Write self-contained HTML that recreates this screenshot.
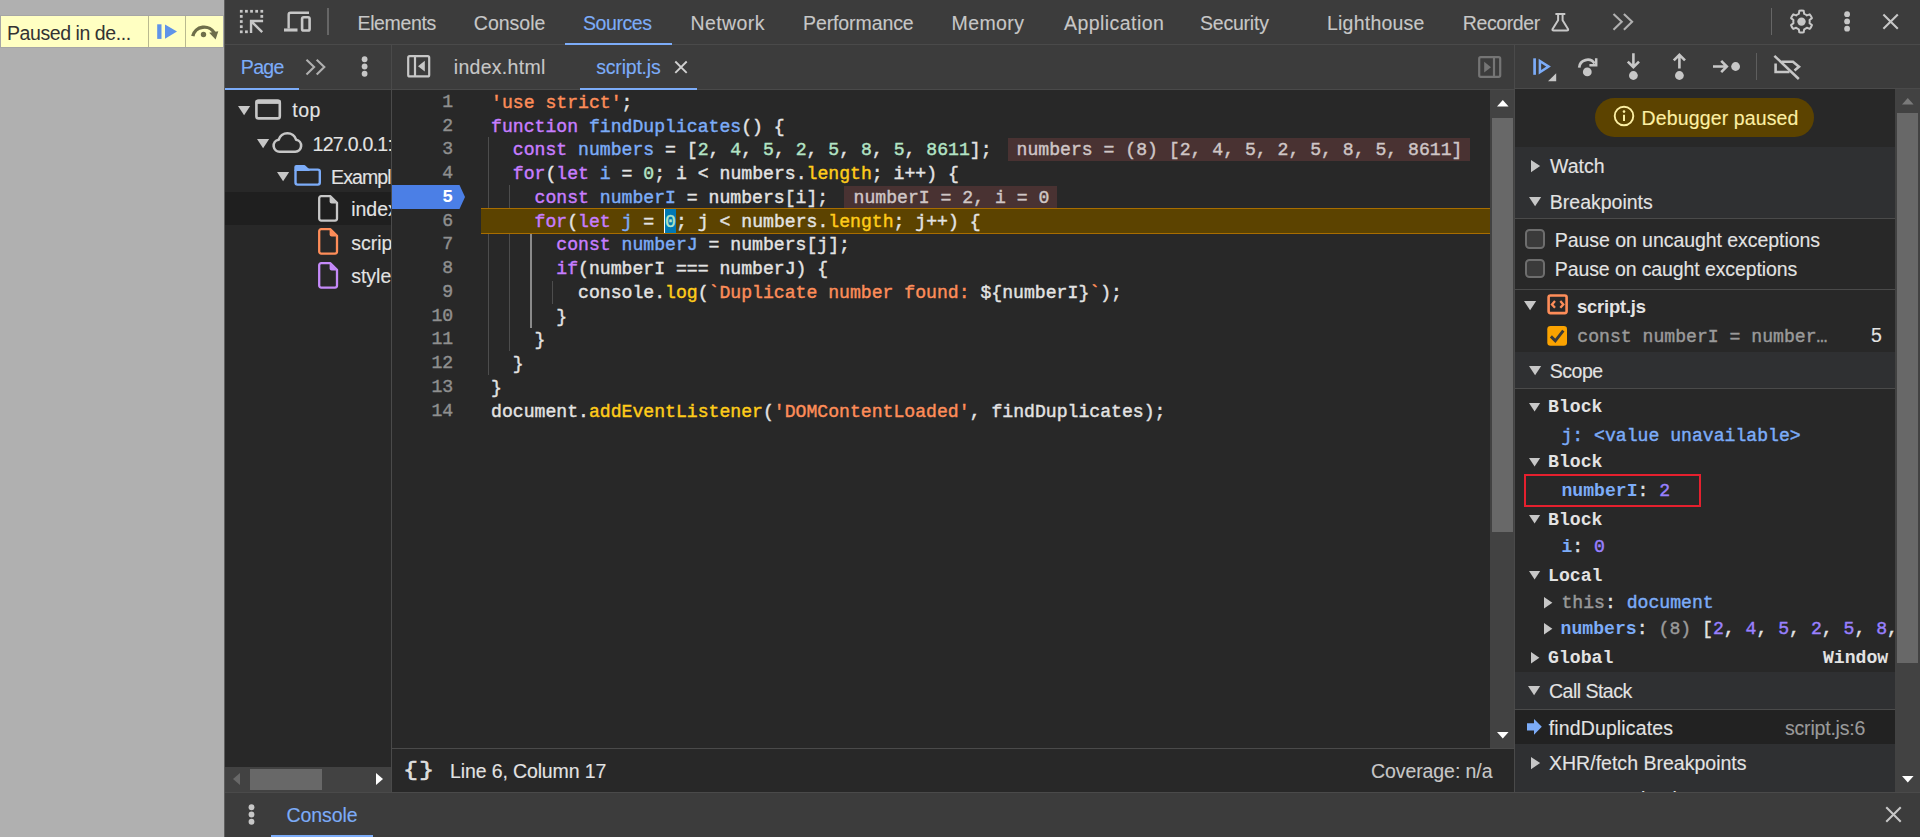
<!DOCTYPE html>
<html lang="en"><head><meta charset="utf-8"><title>DevTools - Sources</title>
<style>
html,body{margin:0;padding:0;background:#282828}
#r{position:relative;width:1920px;height:837px;overflow:hidden;font-family:"Liberation Sans", sans-serif}
#r div,#r svg,#r span.s,#r span.m{position:absolute}
#r svg{overflow:visible}
.s{white-space:pre;line-height:24px;font-family:"Liberation Sans", sans-serif;-webkit-text-stroke:.12px}
.m{white-space:pre;line-height:24px;font-family:"Liberation Mono", monospace;color:#e3e3e3;-webkit-text-stroke:.42px}
.m b{font-weight:inherit}
</style></head>
<body><div id="r">
<div style="left:0px;top:0px;width:224px;height:837px;background:#b0b0b0;"></div>
<div style="left:224px;top:0px;width:1696px;height:837px;background:#282828;"></div>
<div style="left:224px;top:0px;width:1px;height:837px;background:#5e5e5e;"></div>
<div style="left:225px;top:0px;width:1695px;height:44px;background:#3c3c3c;"></div>
<div style="left:225px;top:44px;width:1695px;height:1px;background:#4a4a4a;"></div>
<div style="left:225px;top:45px;width:1695px;height:44px;background:#3c3c3c;"></div>
<div style="left:225px;top:89px;width:1695px;height:1px;background:#4a4a4a;"></div>
<div style="left:391px;top:45px;width:1px;height:747px;background:#4a4a4a;"></div>
<div style="left:1514px;top:45px;width:1px;height:747px;background:#4a4a4a;"></div>
<div style="left:225px;top:792px;width:1695px;height:45px;background:#3c3c3c;"></div>
<div style="left:225px;top:792px;width:1695px;height:1px;background:#4a4a4a;"></div>
<div style="left:0px;top:15px;width:224px;height:33px;background:#ffffc2;box-sizing:border-box;border:1px solid #a6a6a6"></div>
<div style="left:148px;top:16px;width:1px;height:31px;background:#b9b98f;"></div>
<div style="left:185px;top:16px;width:1px;height:31px;background:#b9b98f;"></div>
<span id="t1" class="s" style="left:7px;top:21.16px;font-size:19.5px;color:#333333;letter-spacing:-0.429px;-webkit-text-stroke:0;">Paused in de...</span>
<div style="left:327px;top:8px;width:1.6px;height:27px;background:#666;"></div>
<span id="t2" class="s" style="left:357.5px;top:10.86px;font-size:19.5px;color:#c7c7c7;letter-spacing:-0.357px;">Elements</span>
<span id="t3" class="s" style="left:473.8px;top:10.86px;font-size:19.5px;color:#c7c7c7;">Console</span>
<span id="t4" class="s" style="left:583px;top:10.86px;font-size:19.5px;color:#7cacf8;letter-spacing:-0.417px;">Sources</span>
<span id="t5" class="s" style="left:690.5px;top:10.86px;font-size:19.5px;color:#c7c7c7;letter-spacing:0.417px;">Network</span>
<span id="t6" class="s" style="left:803px;top:10.86px;font-size:19.5px;color:#c7c7c7;letter-spacing:-0.100px;">Performance</span>
<span id="t7" class="s" style="left:951.5px;top:10.86px;font-size:19.5px;color:#c7c7c7;letter-spacing:0.400px;">Memory</span>
<span id="t8" class="s" style="left:1064px;top:10.86px;font-size:19.5px;color:#c7c7c7;letter-spacing:0.450px;">Application</span>
<span id="t9" class="s" style="left:1200px;top:10.86px;font-size:19.5px;color:#c7c7c7;letter-spacing:-0.214px;">Security</span>
<span id="t10" class="s" style="left:1327px;top:10.86px;font-size:19.5px;color:#c7c7c7;letter-spacing:0.222px;">Lighthouse</span>
<span id="t11" class="s" style="left:1462.8px;top:10.86px;font-size:19.5px;color:#c7c7c7;letter-spacing:-0.400px;">Recorder</span>
<div style="left:565px;top:43px;width:107px;height:2px;background:#7cacf8;"></div>
<div style="left:1770.5px;top:8px;width:1.6px;height:27px;background:#666;"></div>
<span id="t12" class="s" style="left:240.8px;top:55.16px;font-size:19.5px;color:#7cacf8;letter-spacing:-0.667px;">Page</span>
<div style="left:225px;top:88px;width:74px;height:2px;background:#7cacf8;"></div>
<svg style="left:406px;top:54px;" width="26" height="24" viewBox="0 0 26 24"><rect x="2.2" y="2.2" width="21" height="20.2" rx="1.5" fill="none" stroke="#c7c7c7" stroke-width="2.2"/><path d="M9 2V22" stroke="#c7c7c7" stroke-width="2.2"/><path d="M18.8 6.8V17.6L12 12.2Z" fill="#c7c7c7"/></svg>
<span id="t13" class="s" style="left:453.8px;top:55.16px;font-size:19.5px;color:#c7c7c7;letter-spacing:0.289px;">index.html</span>
<span id="t14" class="s" style="left:596.3px;top:55.16px;font-size:19.5px;color:#7cacf8;letter-spacing:-0.213px;">script.js</span>
<div style="left:580px;top:87.6px;width:117px;height:2.4px;background:#7cacf8;"></div>
<svg style="left:1476.5px;top:54.5px;" width="26" height="24" viewBox="0 0 26 24"><rect x="2.2" y="2.2" width="21" height="19.6" rx="1.5" fill="none" stroke="#757575" stroke-width="2.2"/><path d="M17 2V22" stroke="#757575" stroke-width="2.2"/><path d="M7.2 6.8V17.6L14 12.2Z" fill="#757575"/></svg>
<div style="left:1756px;top:53px;width:1px;height:27px;background:#5e5e5e;"></div>
<div style="left:225px;top:192px;width:166px;height:33px;background:#1f1f1f;"></div>
<svg style="left:238.2px;top:106.1px;" width="12.2" height="9.2" viewBox="0 0 12.2 9.2"><path d="M0 0H12.2L6.1 9.2Z" fill="#c7c7c7"/></svg>
<span id="t15" class="s" style="left:292.3px;top:98.46px;font-size:19.5px;color:#e3e3e3;letter-spacing:0.500px;">top</span>
<svg style="left:257.4px;top:138.9px;" width="12.2" height="9.2" viewBox="0 0 12.2 9.2"><path d="M0 0H12.2L6.1 9.2Z" fill="#c7c7c7"/></svg>
<div style="left:300px;top:126px;width:91px;height:33px;overflow:hidden">
<span id="t16" class="s" style="left:12.6px;top:5.86px;font-size:19.5px;color:#e3e3e3;letter-spacing:-0.722px;">127.0.0.1:</span>
</div>
<svg style="left:276.9px;top:172.2px;" width="12.2" height="9.2" viewBox="0 0 12.2 9.2"><path d="M0 0H12.2L6.1 9.2Z" fill="#c7c7c7"/></svg>
<div style="left:320px;top:159px;width:71px;height:33px;overflow:hidden">
<span id="t17" class="s" style="left:11.1px;top:5.66px;font-size:19.5px;color:#e3e3e3;letter-spacing:-0.900px;">Exampl</span>
</div>
<svg style="left:317.7px;top:195.0px;" width="21" height="27" viewBox="0 0 21 27"><path d="M3.2 1.2H12.4L19 7.8V23.6A2 2 0 0 1 17 25.6H3.2A2 2 0 0 1 1.2 23.6V3.2A2 2 0 0 1 3.2 1.2Z" fill="none" stroke="#c7c7c7" stroke-width="2.3" stroke-linejoin="round"/><path d="M11.6 1.2L19 8.6H13.6A2 2 0 0 1 11.6 6.6Z" fill="#c7c7c7"/></svg>
<div style="left:340px;top:191.5px;width:51px;height:33px;overflow:hidden">
<span id="t18" class="s" style="left:11.2px;top:5.86px;font-size:19.5px;color:#e3e3e3;">index.html</span>
</div>
<svg style="left:317.7px;top:228.3px;" width="21" height="27" viewBox="0 0 21 27"><path d="M3.2 1.2H12.4L19 7.8V23.6A2 2 0 0 1 17 25.6H3.2A2 2 0 0 1 1.2 23.6V3.2A2 2 0 0 1 3.2 1.2Z" fill="none" stroke="#fe8d59" stroke-width="2.3" stroke-linejoin="round"/><path d="M11.6 1.2L19 8.6H13.6A2 2 0 0 1 11.6 6.6Z" fill="#fe8d59"/></svg>
<div style="left:340px;top:224.8px;width:51px;height:33px;overflow:hidden">
<span id="t19" class="s" style="left:11.2px;top:5.86px;font-size:19.5px;color:#e3e3e3;">script.js</span>
</div>
<svg style="left:317.7px;top:261.7px;" width="21" height="27" viewBox="0 0 21 27"><path d="M3.2 1.2H12.4L19 7.8V23.6A2 2 0 0 1 17 25.6H3.2A2 2 0 0 1 1.2 23.6V3.2A2 2 0 0 1 3.2 1.2Z" fill="none" stroke="#c58af9" stroke-width="2.3" stroke-linejoin="round"/><path d="M11.6 1.2L19 8.6H13.6A2 2 0 0 1 11.6 6.6Z" fill="#c58af9"/></svg>
<div style="left:340px;top:258.2px;width:51px;height:33px;overflow:hidden">
<span id="t20" class="s" style="left:11.2px;top:5.86px;font-size:19.5px;color:#e3e3e3;">styles.css</span>
</div>
<div style="left:225px;top:767px;width:166px;height:25px;background:#424242;"></div>
<div style="left:250px;top:769px;width:72px;height:21px;background:#686868;"></div>
<svg style="left:233px;top:773px;" width="8" height="12" viewBox="0 0 8 12"><path d="M7 0V12L0 6Z" fill="#686868"/></svg>
<svg style="left:375.5px;top:773px;" width="8" height="12" viewBox="0 0 8 12"><path d="M0 0V12L7 6Z" fill="#ffffff"/></svg>
<span class="m" style="left:442.31px;top:89.87px;font-size:18.14px;letter-spacing:0.000px;color:#8f8f8f;">1</span>
<span class="m" style="left:442.31px;top:113.63px;font-size:18.14px;letter-spacing:0.000px;color:#8f8f8f;">2</span>
<span class="m" style="left:442.31px;top:137.39px;font-size:18.14px;letter-spacing:0.000px;color:#8f8f8f;">3</span>
<span class="m" style="left:442.31px;top:161.15px;font-size:18.14px;letter-spacing:0.000px;color:#8f8f8f;">4</span>
<span class="m" style="left:442.31px;top:208.67px;font-size:18.14px;letter-spacing:0.000px;color:#8f8f8f;">6</span>
<span class="m" style="left:442.31px;top:232.43px;font-size:18.14px;letter-spacing:0.000px;color:#8f8f8f;">7</span>
<span class="m" style="left:442.31px;top:256.19px;font-size:18.14px;letter-spacing:0.000px;color:#8f8f8f;">8</span>
<span class="m" style="left:442.31px;top:279.95px;font-size:18.14px;letter-spacing:0.000px;color:#8f8f8f;">9</span>
<span class="m" style="left:431.43px;top:303.71px;font-size:18.14px;letter-spacing:0.000px;color:#8f8f8f;">10</span>
<span class="m" style="left:431.43px;top:327.47px;font-size:18.14px;letter-spacing:0.000px;color:#8f8f8f;">11</span>
<span class="m" style="left:431.43px;top:351.23px;font-size:18.14px;letter-spacing:0.000px;color:#8f8f8f;">12</span>
<span class="m" style="left:431.43px;top:374.99px;font-size:18.14px;letter-spacing:0.000px;color:#8f8f8f;">13</span>
<span class="m" style="left:431.43px;top:398.75px;font-size:18.14px;letter-spacing:0.000px;color:#8f8f8f;">14</span>
<svg style="left:392px;top:185px;" width="74" height="24" viewBox="0 0 74 24"><path d="M0 0H67.5L73 12L67.5 24H0Z" fill="#4b7fe6"/><path d="M65 0H67.5L73 12L67.5 24H65L70.5 12Z" fill="#2f6fe0" opacity=".0"/></svg>
<span class="m" style="left:442.31px;top:184.91px;font-size:18.14px;letter-spacing:0.000px;font-weight:700;-webkit-text-stroke:0;color:#fff;">5</span>
<div style="left:488px;top:137px;width:1px;height:71px;background:#4d4d4d;"></div>
<div style="left:488px;top:234px;width:1px;height:140.5px;background:#4d4d4d;"></div>
<div style="left:509px;top:185px;width:1px;height:23px;background:#4d4d4d;"></div>
<div style="left:509px;top:234px;width:1px;height:116.7px;background:#4d4d4d;"></div>
<div style="left:530px;top:234px;width:2px;height:94px;background:#8a8a8a;"></div>
<div style="left:552px;top:281px;width:1px;height:23px;background:#4d4d4d;"></div>
<div style="left:481px;top:208px;width:1009px;height:26px;background:#5c4300;box-sizing:border-box;border-top:1px solid #a86d00;border-bottom:1px solid #a86d00"></div>
<div style="left:664px;top:209px;width:12px;height:24px;background:#0078b4;"></div>
<div style="left:664px;top:209px;width:1px;height:24px;background:#ffffff;"></div>
<div style="left:1008.4px;top:138.4px;width:462px;height:22.6px;background:#493232;"></div>
<div style="left:844px;top:185.9px;width:212.7px;height:22.6px;background:#493232;"></div>
<span class="m" style="left:491.00px;top:90.77px;font-size:18.14px;letter-spacing:0.000px;"><b style="color:#fe8d59">&#x27;use strict&#x27;</b><b style="color:#e3e3e3">;</b></span>
<span class="m" style="left:491.00px;top:114.53px;font-size:18.14px;letter-spacing:0.000px;"><b style="color:#c77dff">function</b> <b style="color:#7cacf8">findDuplicates</b><b style="color:#e3e3e3">() {</b></span>
<span class="m" style="left:491.00px;top:138.29px;font-size:18.14px;letter-spacing:0.000px;">  <b style="color:#c77dff">const</b> <b style="color:#7cacf8">numbers</b><b style="color:#e3e3e3"> = [</b><b style="color:#b3e4c5">2</b><b style="color:#e3e3e3">, </b><b style="color:#b3e4c5">4</b><b style="color:#e3e3e3">, </b><b style="color:#b3e4c5">5</b><b style="color:#e3e3e3">, </b><b style="color:#b3e4c5">2</b><b style="color:#e3e3e3">, </b><b style="color:#b3e4c5">5</b><b style="color:#e3e3e3">, </b><b style="color:#b3e4c5">8</b><b style="color:#e3e3e3">, </b><b style="color:#b3e4c5">5</b><b style="color:#e3e3e3">, </b><b style="color:#b3e4c5">8611</b><b style="color:#e3e3e3">];</b></span>
<span class="m" style="left:491.00px;top:162.05px;font-size:18.14px;letter-spacing:0.000px;">  <b style="color:#c77dff">for</b><b style="color:#e3e3e3">(</b><b style="color:#c77dff">let</b> <b style="color:#7cacf8">i</b><b style="color:#e3e3e3"> = </b><b style="color:#b3e4c5">0</b><b style="color:#e3e3e3">; i &lt; numbers.</b><b style="color:#ffcc1a">length</b><b style="color:#e3e3e3">; i++) {</b></span>
<span class="m" style="left:491.00px;top:185.81px;font-size:18.14px;letter-spacing:0.000px;">    <b style="color:#c77dff">const</b> <b style="color:#7cacf8">numberI</b><b style="color:#e3e3e3"> = numbers[i];</b></span>
<span class="m" style="left:491.00px;top:209.57px;font-size:18.14px;letter-spacing:0.000px;">    <b style="color:#c77dff">for</b><b style="color:#e3e3e3">(</b><b style="color:#c77dff">let</b> <b style="color:#7cacf8">j</b><b style="color:#e3e3e3"> = </b><b style="color:#b3e4c5">0</b><b style="color:#e3e3e3">; j &lt; numbers.</b><b style="color:#ffcc1a">length</b><b style="color:#e3e3e3">; j++) {</b></span>
<span class="m" style="left:491.00px;top:233.33px;font-size:18.14px;letter-spacing:0.000px;">      <b style="color:#c77dff">const</b> <b style="color:#7cacf8">numberJ</b><b style="color:#e3e3e3"> = numbers[j];</b></span>
<span class="m" style="left:491.00px;top:257.09px;font-size:18.14px;letter-spacing:0.000px;">      <b style="color:#c77dff">if</b><b style="color:#e3e3e3">(numberI === numberJ) {</b></span>
<span class="m" style="left:491.00px;top:280.85px;font-size:18.14px;letter-spacing:0.000px;">        <b style="color:#e3e3e3">console.</b><b style="color:#ffcc1a">log</b><b style="color:#e3e3e3">(</b><b style="color:#fe8d59">`Duplicate number found: </b><b style="color:#e3e3e3">${numberI}</b><b style="color:#fe8d59">`</b><b style="color:#e3e3e3">);</b></span>
<span class="m" style="left:491.00px;top:304.61px;font-size:18.14px;letter-spacing:0.000px;">      <b style="color:#e3e3e3">}</b></span>
<span class="m" style="left:491.00px;top:328.37px;font-size:18.14px;letter-spacing:0.000px;">    <b style="color:#e3e3e3">}</b></span>
<span class="m" style="left:491.00px;top:352.13px;font-size:18.14px;letter-spacing:0.000px;">  <b style="color:#e3e3e3">}</b></span>
<span class="m" style="left:491.00px;top:375.89px;font-size:18.14px;letter-spacing:0.000px;"><b style="color:#e3e3e3">}</b></span>
<span class="m" style="left:491.00px;top:399.65px;font-size:18.14px;letter-spacing:0.000px;"><b style="color:#e3e3e3">document.</b><b style="color:#ffcc1a">addEventListener</b><b style="color:#e3e3e3">(</b><b style="color:#fe8d59">&#x27;DOMContentLoaded&#x27;</b><b style="color:#e3e3e3">, findDuplicates);</b></span>
<span class="m" style="left:1016.50px;top:138.29px;font-size:18.14px;letter-spacing:0.000px;"><b style="color:#cfc6c6">numbers = (8) [2, 4, 5, 2, 5, 8, 5, 8611]</b></span>
<span class="m" style="left:853.60px;top:185.81px;font-size:18.14px;letter-spacing:0.000px;"><b style="color:#cfc6c6">numberI = 2, i = 0</b></span>
<div style="left:1490px;top:90px;width:24px;height:658px;background:#424242;"></div>
<div style="left:1492px;top:118px;width:21px;height:413.5px;background:#686868;"></div>
<svg style="left:1496.7px;top:99.7px;" width="11.6" height="6.6" viewBox="0 0 11.6 6.6"><path d="M0 6.6H11.6L5.8 0Z" fill="#ffffff"/></svg>
<svg style="left:1496.7px;top:731.6px;" width="11.6" height="6.6" viewBox="0 0 11.6 6.6"><path d="M0 0H11.6L5.8 6.6Z" fill="#ffffff"/></svg>
<div style="left:392px;top:748px;width:1122px;height:1px;background:#4a4a4a;"></div>
<span class="m" style="left:403.2px;top:758.6px;font-size:21px;-webkit-text-stroke:.6px;color:#dedede;letter-spacing:.8px;transform:scaleX(1.2);transform-origin:0 0">{}</span>
<span id="t21" class="s" style="left:450px;top:759.36px;font-size:19.5px;color:#e3e3e3;letter-spacing:-0.125px;">Line 6, Column 17</span>
<span id="t22" class="s" style="left:1371px;top:759.36px;font-size:19.5px;color:#c7c7c7;letter-spacing:-0.083px;">Coverage: n/a</span>
<div style="left:1595px;top:98px;width:219px;height:39px;background:#5c4300;border-radius:20px"></div>
<svg style="left:1613px;top:104.6px;" width="22" height="22" viewBox="0 0 22 22"><circle cx="11" cy="11" r="9.3" fill="none" stroke="#fcefa3" stroke-width="1.9"/><path d="M11 9.8V16" stroke="#fcefa3" stroke-width="2"/><circle cx="11" cy="6.6" r="1.3" fill="#fcefa3"/></svg>
<span id="t23" class="s" style="left:1641.6px;top:106.36px;font-size:19.5px;color:#fcefa3;letter-spacing:0.129px;">Debugger paused</span>
<div style="left:1515px;top:147px;width:380px;height:71px;background:#2f3032;"></div>
<div style="left:1515px;top:218px;width:380px;height:1px;background:#4a4a4a;"></div>
<svg style="left:1530.9px;top:159.7px;" width="9.2" height="12.2" viewBox="0 0 9.2 12.2"><path d="M0 0V12.2L9.2 6.1Z" fill="#c7c7c7"/></svg>
<span id="t24" class="s" style="left:1550px;top:154.36px;font-size:19.5px;color:#e3e3e3;">Watch</span>
<svg style="left:1528.9px;top:196.9px;" width="12.2" height="9.2" viewBox="0 0 12.2 9.2"><path d="M0 0H12.2L6.1 9.2Z" fill="#c7c7c7"/></svg>
<span id="t25" class="s" style="left:1549.8px;top:190.36px;font-size:19.5px;color:#e3e3e3;">Breakpoints</span>
<div style="left:1525px;top:229.2px;width:19.6px;height:19.6px;background:#3b3b3b;box-sizing:border-box;border:2px solid #6e6e6e;border-radius:4.5px"></div>
<div style="left:1525px;top:258.9px;width:19.6px;height:19.6px;background:#3b3b3b;box-sizing:border-box;border:2px solid #6e6e6e;border-radius:4.5px"></div>
<span id="t26" class="s" style="left:1554.8px;top:227.86px;font-size:19.5px;color:#e3e3e3;letter-spacing:-0.056px;">Pause on uncaught exceptions</span>
<span id="t27" class="s" style="left:1554.8px;top:257.36px;font-size:19.5px;color:#e3e3e3;letter-spacing:-0.100px;">Pause on caught exceptions</span>
<div style="left:1515px;top:289px;width:380px;height:1px;background:#4a4a4a;"></div>
<svg style="left:1524.4px;top:301.4px;" width="12.2" height="9.2" viewBox="0 0 12.2 9.2"><path d="M0 0H12.2L6.1 9.2Z" fill="#c7c7c7"/></svg>
<span id="t28" class="s" style="left:1577px;top:295.02px;font-size:18.4px;color:#e3e3e3;font-weight:700;-webkit-text-stroke:0;letter-spacing:-0.188px;">script.js</span>
<span class="m" style="left:1577.30px;top:324.67px;font-size:18.14px;letter-spacing:0.000px;"><b style="color:#9a9a9a">const numberI = number…</b></span>
<span id="t29" class="s" style="left:1871px;top:323.46px;font-size:19.5px;color:#e3e3e3;">5</span>
<div style="left:1515px;top:352px;width:380px;height:36px;background:#2f3032;"></div>
<div style="left:1515px;top:388px;width:380px;height:1px;background:#4a4a4a;"></div>
<svg style="left:1528.9px;top:366.4px;" width="12.2" height="9.2" viewBox="0 0 12.2 9.2"><path d="M0 0H12.2L6.1 9.2Z" fill="#c7c7c7"/></svg>
<span id="t30" class="s" style="left:1549.8px;top:359.16px;font-size:19.5px;color:#e3e3e3;letter-spacing:-0.500px;">Scope</span>
<svg style="left:1528.9px;top:403.2px;" width="11.2" height="8.6" viewBox="0 0 11.2 8.6"><path d="M0 0H11.2L5.6 8.6Z" fill="#c7c7c7"/></svg>
<span class="m" style="left:1548.00px;top:395.07px;font-size:18.14px;letter-spacing:0.000px;font-weight:700;-webkit-text-stroke:0;"><b style="color:#e3e3e3">Block</b></span>
<span class="m" style="left:1561.40px;top:423.77px;font-size:18.14px;letter-spacing:0.000px;"><b style="color:#7cacf8">j: &lt;value unavailable&gt;</b></span>
<svg style="left:1528.9px;top:458.4px;" width="11.2" height="8.6" viewBox="0 0 11.2 8.6"><path d="M0 0H11.2L5.6 8.6Z" fill="#c7c7c7"/></svg>
<span class="m" style="left:1548.00px;top:450.27px;font-size:18.14px;letter-spacing:0.000px;font-weight:700;-webkit-text-stroke:0;"><b style="color:#e3e3e3">Block</b></span>
<div style="left:1524.4px;top:474.3px;width:176.6px;height:32.6px;background:transparent;box-sizing:border-box;border:2px solid #e5202e"></div>
<span class="m" style="left:1561.40px;top:479.37px;font-size:18.14px;letter-spacing:0.000px;"><b style="color:#7cacf8;font-weight:700;-webkit-text-stroke:0">numberI</b><b style="color:#e3e3e3">: </b><b style="color:#9980ff">2</b></span>
<svg style="left:1528.9px;top:515.4px;" width="11.2" height="8.6" viewBox="0 0 11.2 8.6"><path d="M0 0H11.2L5.6 8.6Z" fill="#c7c7c7"/></svg>
<span class="m" style="left:1548.00px;top:507.87px;font-size:18.14px;letter-spacing:0.000px;font-weight:700;-webkit-text-stroke:0;"><b style="color:#e3e3e3">Block</b></span>
<span class="m" style="left:1561.40px;top:535.27px;font-size:18.14px;letter-spacing:0.000px;"><b style="color:#7cacf8;font-weight:700;-webkit-text-stroke:0">i</b><b style="color:#e3e3e3">: </b><b style="color:#9980ff">0</b></span>
<svg style="left:1528.9px;top:571.4px;" width="11.2" height="8.6" viewBox="0 0 11.2 8.6"><path d="M0 0H11.2L5.6 8.6Z" fill="#c7c7c7"/></svg>
<span class="m" style="left:1548.00px;top:563.87px;font-size:18.14px;letter-spacing:0.000px;font-weight:700;-webkit-text-stroke:0;"><b style="color:#e3e3e3">Local</b></span>
<svg style="left:1544.0px;top:596.8px;" width="8.4" height="11.4" viewBox="0 0 8.4 11.4"><path d="M0 0V11.4L8.4 5.7Z" fill="#c7c7c7"/></svg>
<span class="m" style="left:1561.40px;top:591.27px;font-size:18.14px;letter-spacing:0.000px;"><b style="color:#9a9a9a">this</b><b style="color:#e3e3e3">: </b><b style="color:#7cacf8">document</b></span>
<svg style="left:1544.0px;top:622.9px;" width="8.4" height="11.4" viewBox="0 0 8.4 11.4"><path d="M0 0V11.4L8.4 5.7Z" fill="#c7c7c7"/></svg>
<div style="left:1555px;top:615px;width:340px;height:28px;overflow:hidden">
<span class="m" style="left:5.60px;top:2.37px;font-size:18.14px;letter-spacing:0.000px;"><b style="color:#7cacf8;font-weight:700;-webkit-text-stroke:0">numbers</b><b style="color:#e3e3e3">: </b><b style="color:#9a9a9a">(8) </b><b style="color:#e3e3e3">[</b><b style="color:#9980ff">2</b><b style="color:#e3e3e3">, </b><b style="color:#9980ff">4</b><b style="color:#e3e3e3">, </b><b style="color:#9980ff">5</b><b style="color:#e3e3e3">, </b><b style="color:#9980ff">2</b><b style="color:#e3e3e3">, </b><b style="color:#9980ff">5</b><b style="color:#e3e3e3">, </b><b style="color:#9980ff">8</b><b style="color:#e3e3e3">, </b><b style="color:#9980ff">5</b><b style="color:#e3e3e3">, </b><b style="color:#9980ff">8611</b><b style="color:#e3e3e3">]</b></span>
</div>
<svg style="left:1530.8px;top:651.7px;" width="8.4" height="11.4" viewBox="0 0 8.4 11.4"><path d="M0 0V11.4L8.4 5.7Z" fill="#c7c7c7"/></svg>
<span class="m" style="left:1548.00px;top:645.87px;font-size:18.14px;letter-spacing:0.000px;font-weight:700;-webkit-text-stroke:0;"><b style="color:#e3e3e3">Global</b></span>
<span class="m" style="left:1822.98px;top:646.17px;font-size:18.14px;letter-spacing:0.000px;font-weight:700;-webkit-text-stroke:0;"><b style="color:#e3e3e3">Window</b></span>
<div style="left:1515px;top:672px;width:380px;height:37px;background:#2f3032;"></div>
<div style="left:1515px;top:709px;width:380px;height:1px;background:#4a4a4a;"></div>
<svg style="left:1528.2px;top:686.4px;" width="12.2" height="9.2" viewBox="0 0 12.2 9.2"><path d="M0 0H12.2L6.1 9.2Z" fill="#c7c7c7"/></svg>
<span id="t31" class="s" style="left:1549px;top:679.36px;font-size:19.5px;color:#e3e3e3;letter-spacing:-0.511px;">Call Stack</span>
<div style="left:1515px;top:710px;width:380px;height:34px;background:#222222;"></div>
<svg style="left:1526.6px;top:719.1px;" width="16" height="16" viewBox="0 0 16 16"><path d="M0 4.2H7V0L14.8 7.85L7 15.7V11.5H0Z" fill="#7cacf8"/></svg>
<span id="t32" class="s" style="left:1548.7px;top:716.36px;font-size:19.5px;color:#e3e3e3;letter-spacing:0.138px;">findDuplicates</span>
<span id="t33" class="s" style="left:1785px;top:716.36px;font-size:19.5px;color:#9a9a9a;letter-spacing:-0.200px;">script.js:6</span>
<div style="left:1515px;top:744px;width:380px;height:48px;background:#2f3032;"></div>
<svg style="left:1530.9px;top:756.9px;" width="9.2" height="12.2" viewBox="0 0 9.2 12.2"><path d="M0 0V12.2L9.2 6.1Z" fill="#c7c7c7"/></svg>
<span id="t34" class="s" style="left:1549px;top:751.36px;font-size:19.5px;color:#e3e3e3;letter-spacing:0.015px;">XHR/fetch Breakpoints</span>
<div style="left:1515px;top:780px;width:380px;height:12px;overflow:hidden">
<svg style="left:15.9px;top:12.9px;" width="9.2" height="12.2" viewBox="0 0 9.2 12.2"><path d="M0 0V12.2L9.2 6.1Z" fill="#c7c7c7"/></svg>
<span id="t35" class="s" style="left:34px;top:7.26px;font-size:19.5px;color:#e3e3e3;">DOM Breakpoints</span>
</div>
<div style="left:1515px;top:88px;width:405px;height:1px;background:#4a4a4a;"></div>
<div style="left:1515px;top:89px;width:380px;height:1px;background:#282828;"></div>
<div style="left:1895px;top:89px;width:25px;height:703px;background:#424242;"></div>
<div style="left:1897px;top:113px;width:21px;height:550px;background:#686868;"></div>
<svg style="left:1901.7px;top:97.6px;" width="11.6" height="6.6" viewBox="0 0 11.6 6.6"><path d="M0 6.6H11.6L5.8 0Z" fill="#7a7a7a"/></svg>
<svg style="left:1901.7px;top:775.6px;" width="11.6" height="6.6" viewBox="0 0 11.6 6.6"><path d="M0 0H11.6L5.8 6.6Z" fill="#ffffff"/></svg>
<span id="t36" class="s" style="left:286.5px;top:803.16px;font-size:19.5px;color:#7cacf8;letter-spacing:-0.083px;">Console</span>
<div style="left:271px;top:835px;width:102px;height:2px;background:#7cacf8;"></div>
<svg style="left:0;top:0" width="1920" height="837" viewBox="0 0 1920 837"><rect x="157.2" y="24.3" width="4.3" height="14.6" fill="#5f93e8"/><path d="M165 24.4L177 31.6L165 38.7Z" fill="#5f93e8"/><path d="M192.8 36.2A11.6 11.2 0 0 1 214.6 33.4" fill="none" stroke="#6e6e4a" stroke-width="3.5"/><path d="M209.2 32.8L218.3 31.2L215.6 39.4Z" fill="#6e6e4a"/><circle cx="203.5" cy="34.5" r="2.7" fill="#6e6e4a"/><rect x="239.90" y="9.90" width="2.75" height="2.75" fill="#c7c7c7"/><rect x="245.03" y="9.90" width="2.75" height="2.75" fill="#c7c7c7"/><rect x="239.90" y="15.03" width="2.75" height="2.75" fill="#c7c7c7"/><rect x="250.16" y="9.90" width="2.75" height="2.75" fill="#c7c7c7"/><rect x="239.90" y="20.16" width="2.75" height="2.75" fill="#c7c7c7"/><rect x="255.29" y="9.90" width="2.75" height="2.75" fill="#c7c7c7"/><rect x="239.90" y="25.29" width="2.75" height="2.75" fill="#c7c7c7"/><rect x="260.42" y="9.90" width="2.75" height="2.75" fill="#c7c7c7"/><rect x="239.90" y="30.42" width="2.75" height="2.75" fill="#c7c7c7"/><rect x="245.03" y="30.42" width="2.75" height="2.75" fill="#c7c7c7"/><rect x="260.42" y="15.03" width="2.75" height="2.75" fill="#c7c7c7"/><path d="M249.9 21.05H263.1M251.05 19.9V33M251.4 21.4L262.2 32.2" fill="none" stroke="#c7c7c7" stroke-width="2.4"/><path d="M288.65 28.6V14.6Q288.65 12.7 290.6 12.7H309" fill="none" stroke="#c7c7c7" stroke-width="2.4"/><path d="M284 30H297.5" stroke="#c7c7c7" stroke-width="3.1"/><rect x="302.1" y="17.2" width="7.5" height="13.3" rx="1.6" fill="none" stroke="#c7c7c7" stroke-width="2.6"/><path d="M1555.4 14H1565.3M1558.1 14V20.2L1552.6 29Q1552 30.4 1553.6 30.4H1567Q1568.6 30.4 1568 29L1562.6 20.2V14" fill="none" stroke="#c7c7c7" stroke-width="2" stroke-linejoin="round"/><path d="M1613.5 13.9L1621.7 21.8L1613.5 29.700000000000003M1623.9 13.9L1632.1000000000001 21.8L1623.9 29.700000000000003" fill="none" stroke="#b0b0b0" stroke-width="2.1"/><path d="M1798.83 13.85L1799.31 10.82A11 11 0 0 1 1803.69 10.82L1804.17 13.85A8.2 8.2 0 0 1 1806.88 15.41L1809.74 14.31A11 11 0 0 1 1811.93 18.11L1809.55 20.04A8.2 8.2 0 0 1 1809.55 23.16L1811.93 25.09A11 11 0 0 1 1809.74 28.89L1806.88 27.79A8.2 8.2 0 0 1 1804.17 29.35L1803.69 32.38A11 11 0 0 1 1799.31 32.38L1798.83 29.35A8.2 8.2 0 0 1 1796.12 27.79L1793.26 28.89A11 11 0 0 1 1791.07 25.09L1793.45 23.16A8.2 8.2 0 0 1 1793.45 20.04L1791.07 18.11A11 11 0 0 1 1793.26 14.31L1796.12 15.41A8.2 8.2 0 0 1 1798.83 13.85Z" fill="none" stroke="#c7c7c7" stroke-width="2" stroke-linejoin="round"/><circle cx="1801.5" cy="21.6" r="4.2" fill="#c7c7c7"/><circle cx="1847.1" cy="14.2" r="2.9" fill="#c7c7c7"/><circle cx="1847.1" cy="21.45" r="2.9" fill="#c7c7c7"/><circle cx="1847.1" cy="28.7" r="2.9" fill="#c7c7c7"/><path d="M1883.3999999999999 14.400000000000002L1897.8 28.8M1897.8 14.400000000000002L1883.3999999999999 28.8" stroke="#c7c7c7" stroke-width="2.1" fill="none"/><path d="M306.5 59.8L314.1 67.1L306.5 74.39999999999999M316.7 59.8L324.3 67.1L316.7 74.39999999999999" fill="none" stroke="#b0b0b0" stroke-width="2.1"/><circle cx="364.6" cy="59.25" r="2.9" fill="#c7c7c7"/><circle cx="364.6" cy="66.5" r="2.9" fill="#c7c7c7"/><circle cx="364.6" cy="73.75" r="2.9" fill="#c7c7c7"/><path d="M675.3 61.5L686.7 72.9M686.7 61.5L675.3 72.9" stroke="#d0d0d0" stroke-width="1.9" fill="none"/><path d="M1534.6 58.3V74.8" stroke="#7cacf8" stroke-width="2.7"/><path d="M1539.9 61L1548.6 66.6L1539.9 72.3Z" fill="none" stroke="#7cacf8" stroke-width="2.5"/><path d="M1556.2 73.2V81.2H1548Z" fill="#c7c7c7"/><path d="M1579.2 67.6A8.4 8.4 0 0 1 1594.6 63.6" fill="none" stroke="#c7c7c7" stroke-width="2.7"/><path d="M1596.2 58.3V65.2H1589.4" fill="none" stroke="#c7c7c7" stroke-width="2.5"/><circle cx="1587.3" cy="71.9" r="4.4" fill="#c7c7c7"/><path d="M1633.4 53.2V67M1627.8 61.6L1633.4 67.2L1639 61.6" fill="none" stroke="#c7c7c7" stroke-width="2.6"/><circle cx="1633.4" cy="75.5" r="4.4" fill="#c7c7c7"/><path d="M1679.4 68.4V55M1673.8 60.4L1679.4 54.8L1685 60.4" fill="none" stroke="#c7c7c7" stroke-width="2.6"/><circle cx="1679.4" cy="75.5" r="4.4" fill="#c7c7c7"/><path d="M1713 66.5H1726.4M1721.2 60.9L1726.8 66.5L1721.2 72.1" fill="none" stroke="#c7c7c7" stroke-width="2.6"/><circle cx="1735.6" cy="66.5" r="4.4" fill="#c7c7c7"/><path d="M1781.5 61.8H1793L1799 66.8L1794.5 70.6M1789.5 72H1775.6V63.5" fill="none" stroke="#c7c7c7" stroke-width="2.6" stroke-linejoin="miter"/><path d="M1774.4 55.8L1798.8 79" stroke="#c7c7c7" stroke-width="2.5"/><rect x="256.4" y="100.5" width="23.4" height="17.9" rx="2.2" fill="none" stroke="#c7c7c7" stroke-width="2.6"/><path d="M255.6 102.1H280.6" stroke="#c7c7c7" stroke-width="3.6"/><path d="M280 151.7H295.3A6 6 0 0 0 296.2 139.8A9.2 9.2 0 0 0 278.6 139.8A6 6 0 0 0 280 151.7Z" fill="none" stroke="#c7c7c7" stroke-width="2.6" stroke-linejoin="round"/><rect x="295.5" y="169.6" width="24.3" height="15" rx="2" fill="none" stroke="#7cacf8" stroke-width="2.4"/><path d="M294.3 171V167.1Q294.3 165.1 296.3 165.1H304.2Q305 165.1 305.6 165.7L309.6 169.6V171Z" fill="#7cacf8"/><rect x="1548.6" y="295.5" width="18" height="17.6" rx="1.8" fill="none" stroke="#fe8d59" stroke-width="2.6"/><path d="M1555 301.1L1552 304.4L1555 307.7M1560.3 301.1L1563.3 304.4L1560.3 307.7" fill="none" stroke="#fe8d59" stroke-width="2.3"/><rect x="1547.3" y="326.1" width="19.7" height="19.7" rx="3.2" fill="#fba300"/><path d="M1550.9 336.4L1555.3 340.8L1563.3 330.6" fill="none" stroke="#3a3a3a" stroke-width="2.9"/><circle cx="251.5" cy="807.25" r="2.9" fill="#c7c7c7"/><circle cx="251.5" cy="814.5" r="2.9" fill="#c7c7c7"/><circle cx="251.5" cy="821.75" r="2.9" fill="#c7c7c7"/><path d="M1886.25 807.25L1900.75 821.75M1900.75 807.25L1886.25 821.75" stroke="#c7c7c7" stroke-width="2.1" fill="none"/></svg>
</div></body></html>
